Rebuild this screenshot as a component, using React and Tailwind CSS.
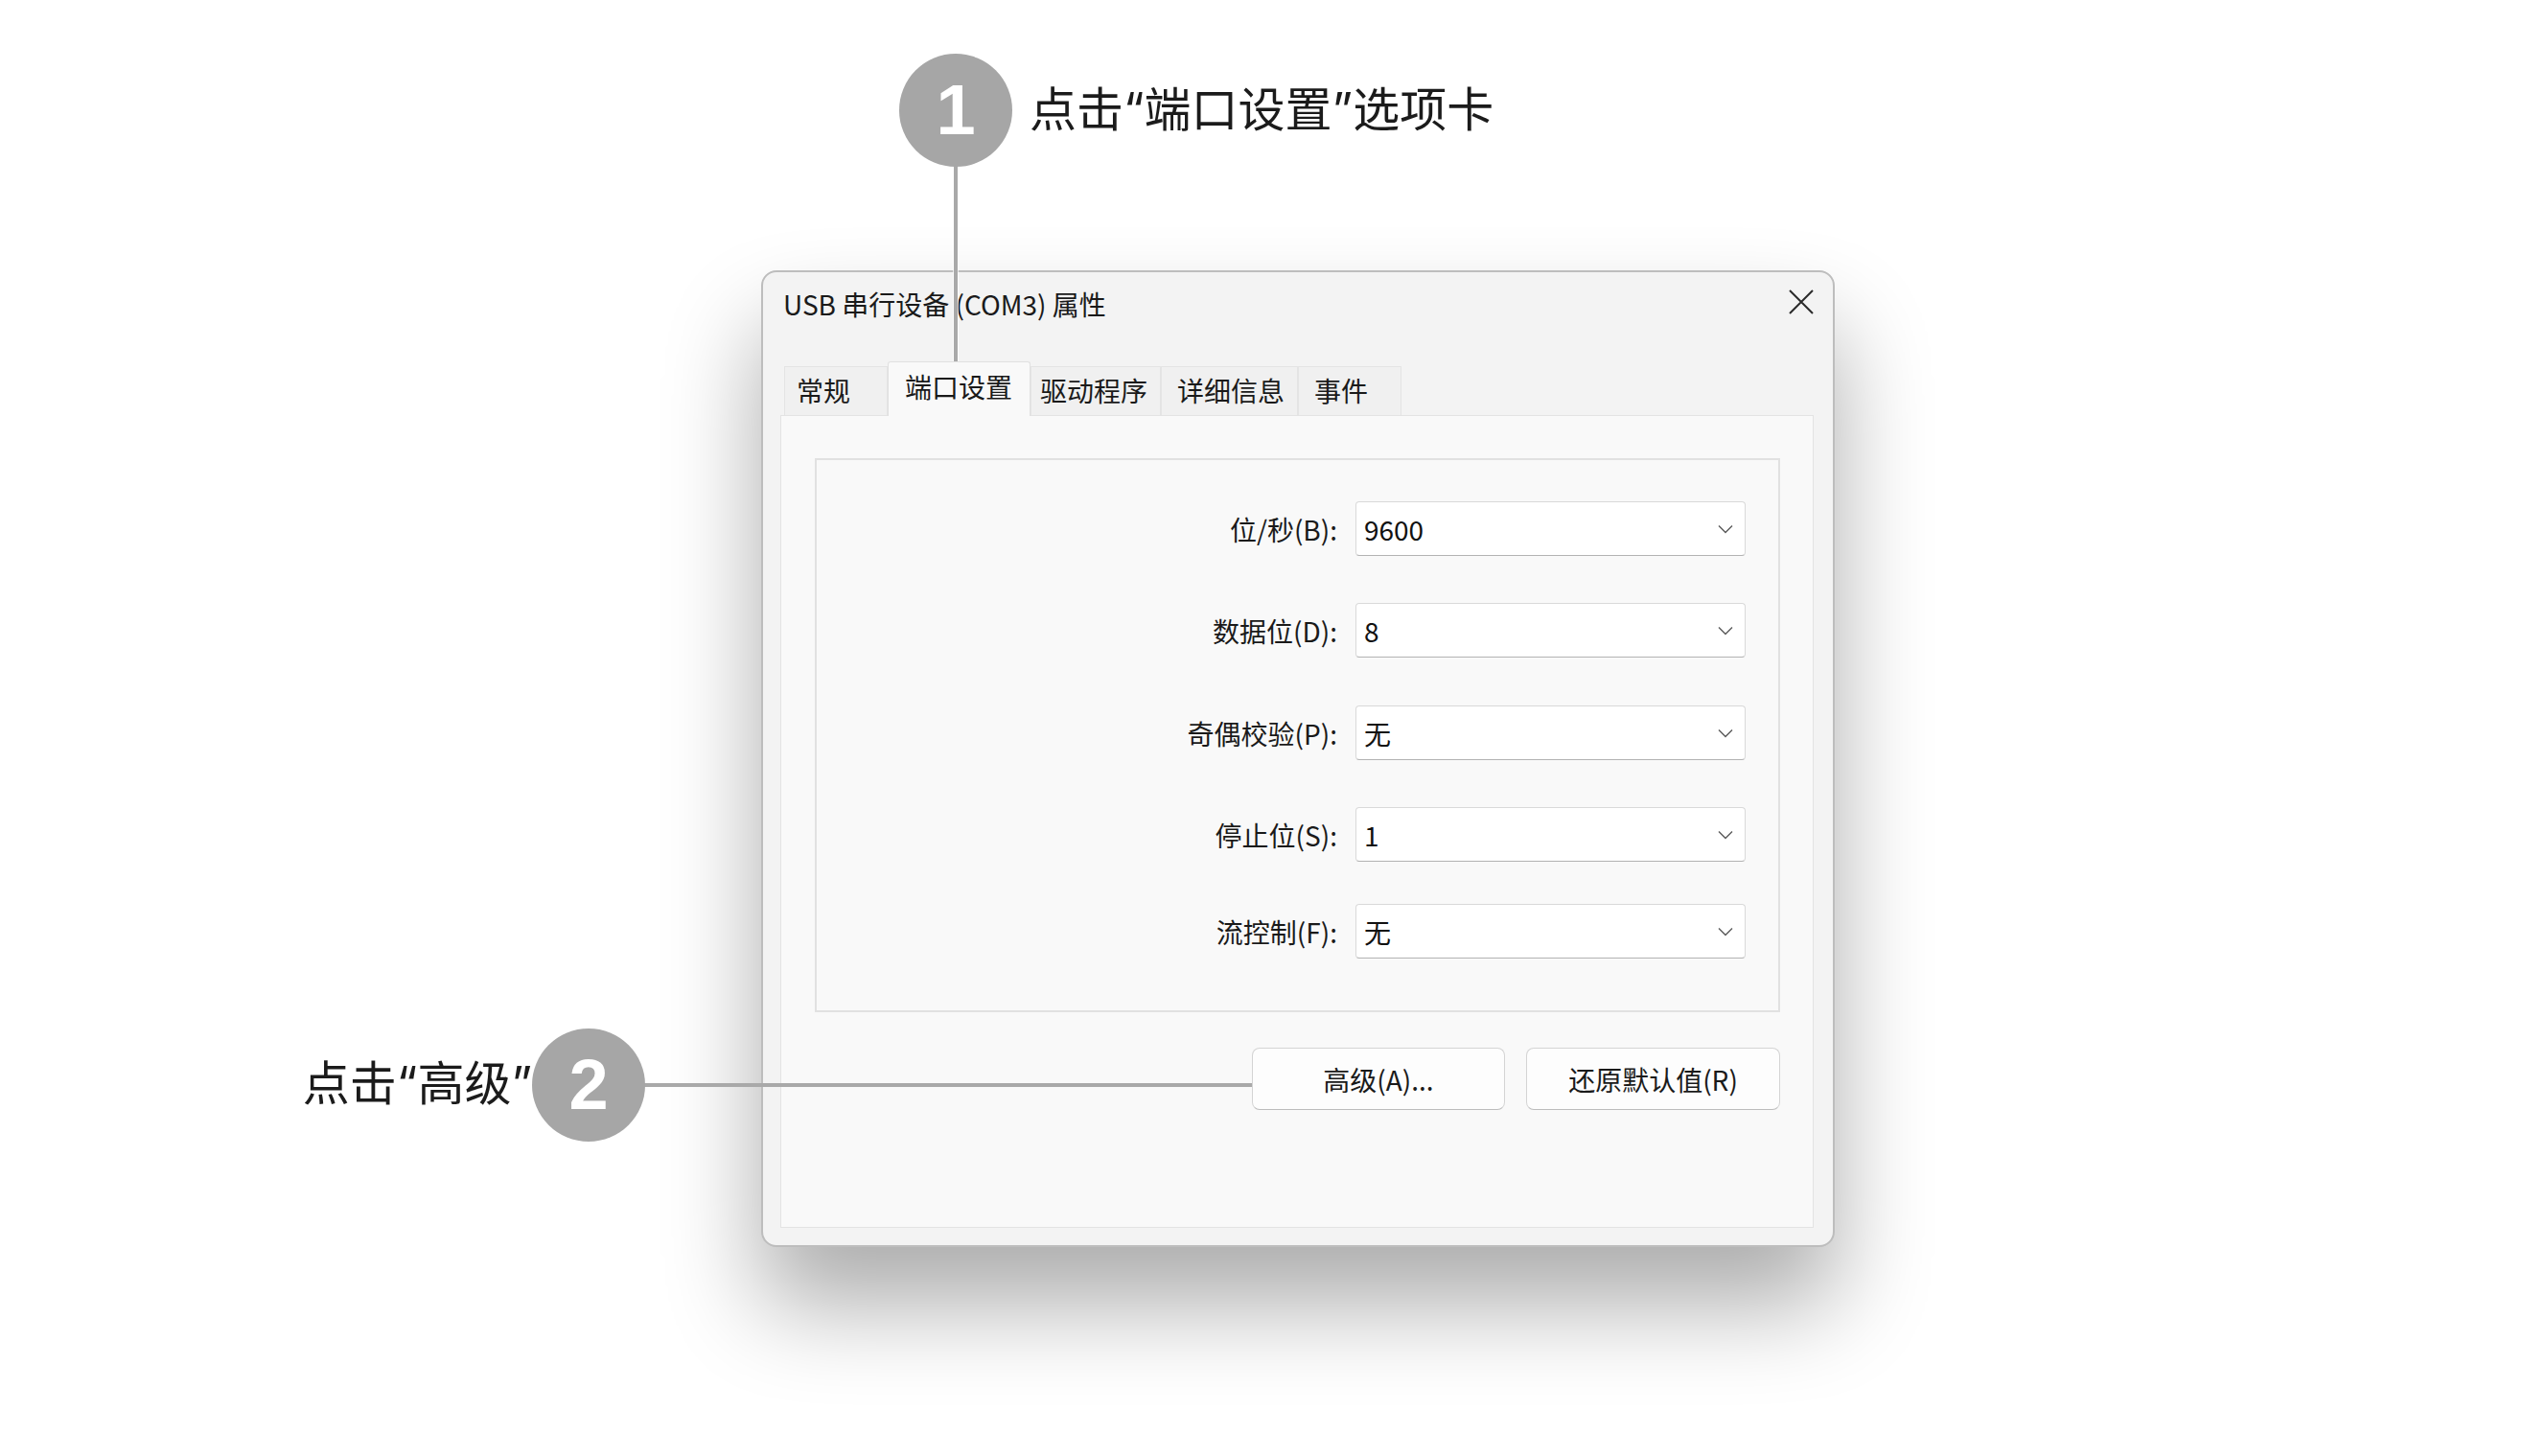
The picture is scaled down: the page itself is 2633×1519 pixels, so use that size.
import React from "react";

const rows = [
  { label: "位/秒(B):", value: "9600", mt: "mt-[43px]" },
  { label: "数据位(D):", value: "8", mt: "mt-[49px]" },
  { label: "奇偶校验(P):", value: "无", mt: "mt-[50px]" },
  { label: "停止位(S):", value: "1", mt: "mt-[49px]" },
  { label: "流控制(F):", value: "无", mt: "mt-[44px]" },
];

const tabs = [
  { name: "常规", cls: "w-[108px] pl-[12px]" },
  { name: "端口设置", cls: "w-[149px] pl-[17px]", active: true },
  { name: "驱动程序", cls: "w-[136px] pl-[9px]" },
  { name: "详细信息", cls: "w-[143px] pl-[16px]" },
  { name: "事件", cls: "w-[108px] pl-[16px]" },
];

function Chevron() {
  return (
    <svg width="16" height="10" viewBox="0 0 16 10" fill="none">
      <path d="M1 1.5 L8 8.5 L15 1.5" stroke="#5a5a5a" strokeWidth="1.4" />
    </svg>
  );
}

function Combo({ value }) {
  return (
    <div className="w-[407px] h-[57px] bg-white border border-[#d9d9d9] border-b-[#b3b3b3] rounded-[4px] flex items-center justify-between pl-[8px] pr-[12px]">
      <span className="text-[28px] text-[#111]">{value}</span>
      <Chevron />
    </div>
  );
}

function Step({ n }) {
  return (
    <div className="w-[118px] h-[118px] rounded-full bg-[#a6a6a6] flex items-center justify-center">
      <span className="text-white text-[74px] font-bold leading-none font-['Liberation_Sans',Arial,sans-serif]">
        {n}
      </span>
    </div>
  );
}

export default function App() {
  return (
    <div className="relative w-[2633px] h-[1519px] bg-white overflow-hidden font-['Noto_Sans_CJK_SC',sans-serif]">
      {/* dialog */}
      <div className="pt-[282px] pl-[794px]">
        <div className="w-[1120px] h-[1019px] rounded-[16px] border-2 border-[#bdbdbd] bg-[#f3f3f3] flex flex-col shadow-[0_60px_100px_rgba(0,0,0,0.33)]">
          <div className="h-[66px] flex items-center justify-between pl-[21px] pr-[20px]">
            <span className="text-[28px] text-[#1a1a1a]">USB 串行设备 (COM3) 属性</span>
            <svg width="26" height="26" viewBox="0 0 26 26" className="-mt-[4px]">
              <path d="M1 1 L25 25 M25 1 L1 25" stroke="#2a2a2a" strokeWidth="2" />
            </svg>
          </div>

          <div className="mt-[27px] h-[56px] flex items-end pl-[22px]">
            {tabs.map((t) =>
              t.active ? (
                <div
                  key={t.name}
                  className={`${t.cls} relative z-10 h-[57px] -mb-px bg-[#f9f9f9] border border-b-0 border-[#e1e1e1] rounded-t-[3px] pt-[7px] text-[28px] text-[#1a1a1a] leading-[36px]`}>
                  {t.name}
                </div>
              ) : (
                <div
                  key={t.name}
                  className={`${t.cls} h-[51px] bg-[#f0f0f0] border border-b-0 border-[#e4e4e4] pt-[6px] text-[28px] text-[#1a1a1a] leading-[36px]`}>
                  {t.name}
                </div>
              )
            )}
          </div>

          <div className="ml-[18px] mr-[20px] mb-[18px] flex-1 border border-[#e3e3e3] bg-[#f9f9f9] pl-[35px] pt-[44px]">
            <div className="w-[1007px] h-[578px] border-2 border-[#e1e1e1] flex flex-col items-end pr-[34px]">
              {rows.map((r) => (
                <div key={r.label} className={`${r.mt} flex items-center`}>
                  <span className="text-[28px] text-[#1a1a1a] mr-[19px]">{r.label}</span>
                  <Combo value={r.value} />
                </div>
              ))}
            </div>

            <div className="w-[1007px] mt-[37px] flex justify-end gap-[22px]">
              <button className="w-[264px] h-[65px] bg-[#fdfdfd] border border-[#d4d4d4] border-b-[#bdbdbd] rounded-[8px] text-[28px] text-[#1a1a1a]">
                高级(A)...
              </button>
              <button className="w-[265px] h-[65px] bg-[#fdfdfd] border border-[#d4d4d4] border-b-[#bdbdbd] rounded-[8px] text-[28px] text-[#1a1a1a]">
                还原默认值(R)
              </button>
            </div>
          </div>
        </div>
      </div>

      {/* callout 1 */}
      <div className="absolute left-[995px] top-[172px] w-[4px] h-[205px] bg-[#a9a9a9] shadow-[0_0_0_1px_rgba(255,255,255,0.7)]" />
      <div className="absolute left-[938px] top-[56px]">
        <Step n="1" />
      </div>
      <div className="absolute left-[1074px] top-[80px] h-[70px] flex items-center text-[49px] font-normal text-[#1b1b1b] whitespace-nowrap font-[Inter,'Noto_Sans_CJK_SC',sans-serif]">
        点击“端口设置”选项卡
      </div>

      {/* callout 2 */}
      <div className="absolute left-[670px] top-[1130px] w-[636px] h-[4px] bg-[#a9a9a9]" />
      <div className="absolute left-[555px] top-[1073px]">
        <Step n="2" />
      </div>
      <div className="absolute right-[2078px] top-[1096px] h-[70px] flex items-center text-[49px] font-normal text-[#1b1b1b] whitespace-nowrap font-[Inter,'Noto_Sans_CJK_SC',sans-serif]">
        点击“高级”
      </div>
    </div>
  );
}
